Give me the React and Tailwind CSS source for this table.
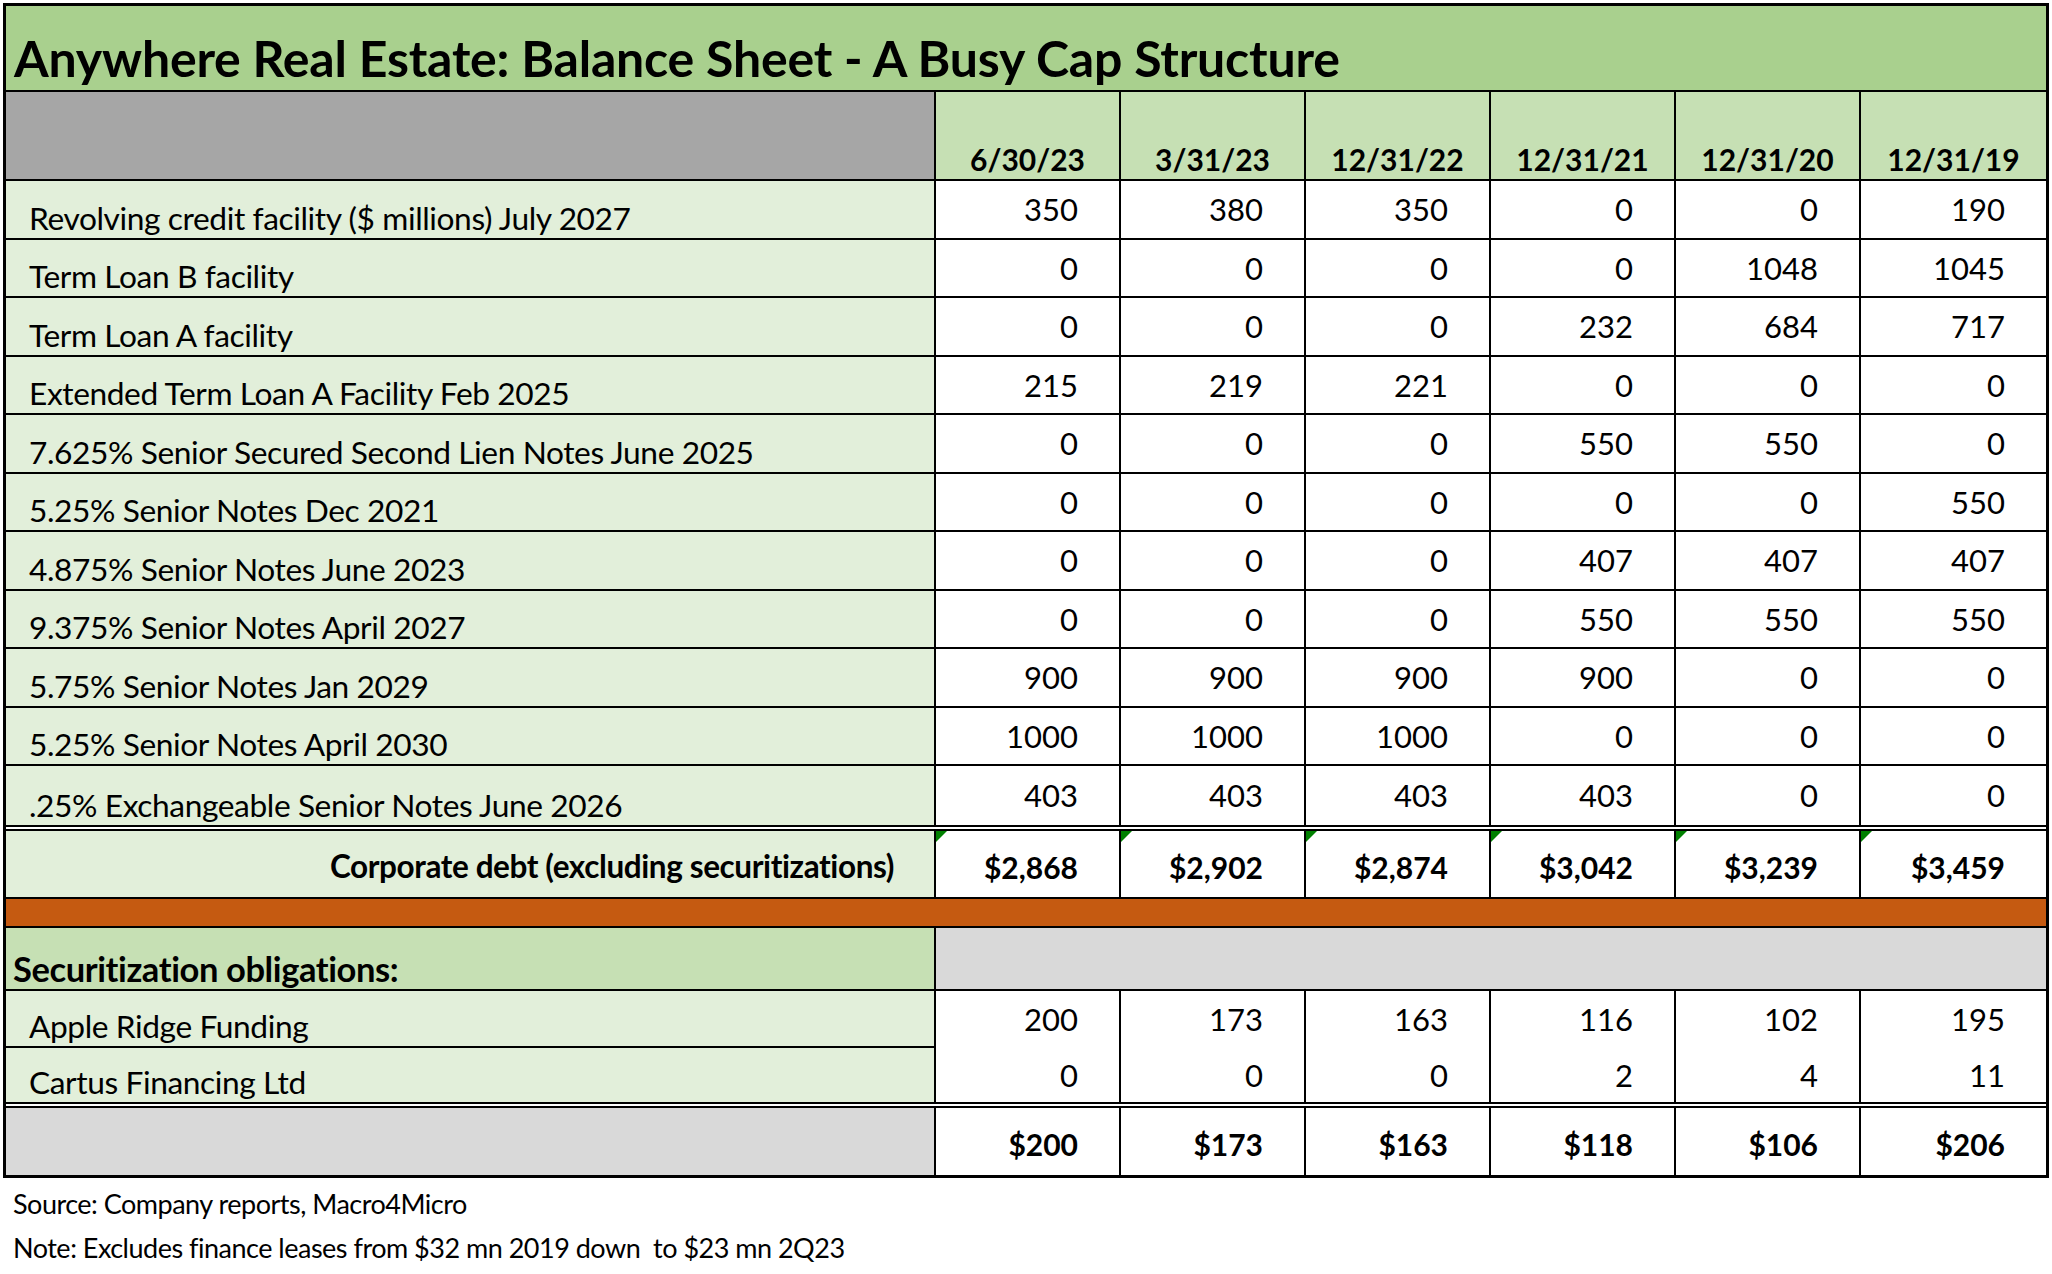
import React from "react";

const dates = ["6/30/23", "3/31/23", "12/31/22", "12/31/21", "12/31/20", "12/31/19"];

const debtRows = [
  ["Revolving credit facility ($ millions) July 2027", [350, 380, 350, 0, 0, 190], "h-[59px]"],
  ["Term Loan B facility", [0, 0, 0, 0, 1048, 1045], "h-[58px]"],
  ["Term Loan A facility", [0, 0, 0, 232, 684, 717], "h-[59px]"],
  ["Extended Term Loan A Facility Feb 2025", [215, 219, 221, 0, 0, 0], "h-[58px]"],
  ["7.625% Senior Secured Second Lien Notes June 2025", [0, 0, 0, 550, 550, 0], "h-[59px]"],
  ["5.25% Senior Notes Dec 2021", [0, 0, 0, 0, 0, 550], "h-[58px]"],
  ["4.875% Senior Notes June 2023", [0, 0, 0, 407, 407, 407], "h-[59px]"],
  ["9.375% Senior Notes April 2027", [0, 0, 0, 550, 550, 550], "h-[58px]"],
  ["5.75% Senior Notes Jan 2029", [900, 900, 900, 900, 0, 0], "h-[59px]"],
  ["5.25% Senior Notes April 2030", [1000, 1000, 1000, 0, 0, 0], "h-[58px]"],
];

const lastDebt = [".25% Exchangeable Senior Notes June 2026", [403, 403, 403, 403, 0, 0]];
const corpTotals = ["$2,868", "$2,902", "$2,874", "$3,042", "$3,239", "$3,459"];
const secTotals = ["$200", "$173", "$163", "$118", "$106", "$206"];

const font = { fontFamily: "Lato, 'Open Sans', sans-serif" };

// one grid row: wide label column + six date columns
const Row = ({ className = "", children }) => (
  <div className={`grid grid-cols-[930px_repeat(6,185px)] ${className}`}>{children}</div>
);

const labelCls =
  "bg-[#e2efda] border-r-2 border-black flex items-end pl-[23px] pb-[3px] text-[31.7px] leading-none text-black tracking-[-0.4px] whitespace-nowrap";

const NumCell = ({ value, last, bold, flag }) => (
  <div
    className={`relative flex items-center justify-end pr-[41px] bg-white text-black ${
      last ? "" : "border-r-2 border-black"
    } ${bold ? "font-bold text-[30px] pt-[6px]" : "text-[31px]"}`}
  >
    {flag && (
      <span className="absolute left-0 top-0 w-0 h-0 border-t-[11px] border-r-[11px] border-t-[#008000] border-r-transparent" />
    )}
    {value}
  </div>
);

export default function App() {
  return (
    <div className="w-[2052px] h-[1274px] bg-white overflow-hidden" style={font}>
      <div className="pt-[3px] pl-[3px]">
        <div className="w-[2046px] border-[3px] border-black">
          {/* Title */}
          <div className="h-[86px] bg-[#a9d08e] border-b-2 border-black flex items-end pl-[8px] pb-[7px]">
            <h1 className="text-[50px] font-bold leading-none text-black tracking-[-0.2px] whitespace-nowrap">
              Anywhere Real Estate: Balance Sheet - A Busy Cap Structure
            </h1>
          </div>

          {/* Date header */}
          <Row className="h-[89px] border-b-2 border-black">
            <div className="bg-[#a6a6a6] border-r-2 border-black" />
            {dates.map((d, i) => (
              <div
                key={d}
                className={`bg-[#c6e0b4] flex items-end justify-center pb-[5px] text-[30px] leading-none font-bold text-black ${
                  i === 5 ? "" : "border-r-2 border-black"
                }`}
              >
                {d}
              </div>
            ))}
          </Row>

          {/* Corporate debt lines */}
          {debtRows.map(([label, vals, h]) => (
            <Row key={label} className={`${h} border-b-2 border-black`}>
              <div className={labelCls}>{label}</div>
              {vals.map((v, i) => (
                <NumCell key={i} value={v} last={i === 5} />
              ))}
            </Row>
          ))}
          <Row className="h-[65px] border-b-[6px] border-double border-black">
            <div className={labelCls}>{lastDebt[0]}</div>
            {lastDebt[1].map((v, i) => (
              <NumCell key={i} value={v} last={i === 5} />
            ))}
          </Row>

          {/* Corporate total */}
          <Row className="h-[68px] border-b-2 border-black">
            <div className="bg-[#e2efda] border-r-2 border-black flex items-center justify-end pr-[40px] pt-[5px] text-[31.5px] font-bold text-black tracking-[-0.4px] whitespace-nowrap">
              Corporate debt (excluding securitizations)
            </div>
            {corpTotals.map((v, i) => (
              <NumCell key={v} value={v} last={i === 5} bold flag />
            ))}
          </Row>

          {/* Orange separator */}
          <div className="h-[29px] bg-[#c55a11] border-b-2 border-black" />

          {/* Securitization header */}
          <Row className="h-[63px] border-b-2 border-black">
            <div className="bg-[#c6e0b4] border-r-2 border-black flex items-end pl-[7px] pb-[3px] text-[34.5px] leading-none font-bold text-black tracking-[-0.4px] whitespace-nowrap">
              Securitization obligations:
            </div>
            <div className="col-span-6 bg-[#d9d9d9]" />
          </Row>

          {/* Securitization lines */}
          <div className="grid grid-cols-[930px_repeat(6,185px)] border-b-[6px] border-double border-black">
            <div className={`h-[57px] border-b-2 ${labelCls}`}>Apple Ridge Funding</div>
            {[200, 173, 163, 116, 102, 195].map((v, i) => (
              <NumCell key={i} value={v} last={i === 5} />
            ))}
            <div className={`h-[54px] ${labelCls}`}>Cartus Financing Ltd</div>
            {[0, 0, 0, 2, 4, 11].map((v, i) => (
              <NumCell key={i} value={v} last={i === 5} />
            ))}
          </div>

          {/* Securitization total */}
          <Row className="h-[67px]">
            <div className="bg-[#d9d9d9] border-r-2 border-black" />
            {secTotals.map((v, i) => (
              <NumCell key={v} value={v} last={i === 5} bold />
            ))}
          </Row>
        </div>

        {/* Footnotes */}
        <div className="pl-[10px] pt-[4px] text-[27px] text-black leading-[44px] tracking-[-0.5px]">
          <p>Source: Company reports, Macro4Micro</p>
          <p>Note: Excludes finance leases from $32 mn 2019 down&nbsp; to $23 mn 2Q23</p>
        </div>
      </div>
    </div>
  );
}
